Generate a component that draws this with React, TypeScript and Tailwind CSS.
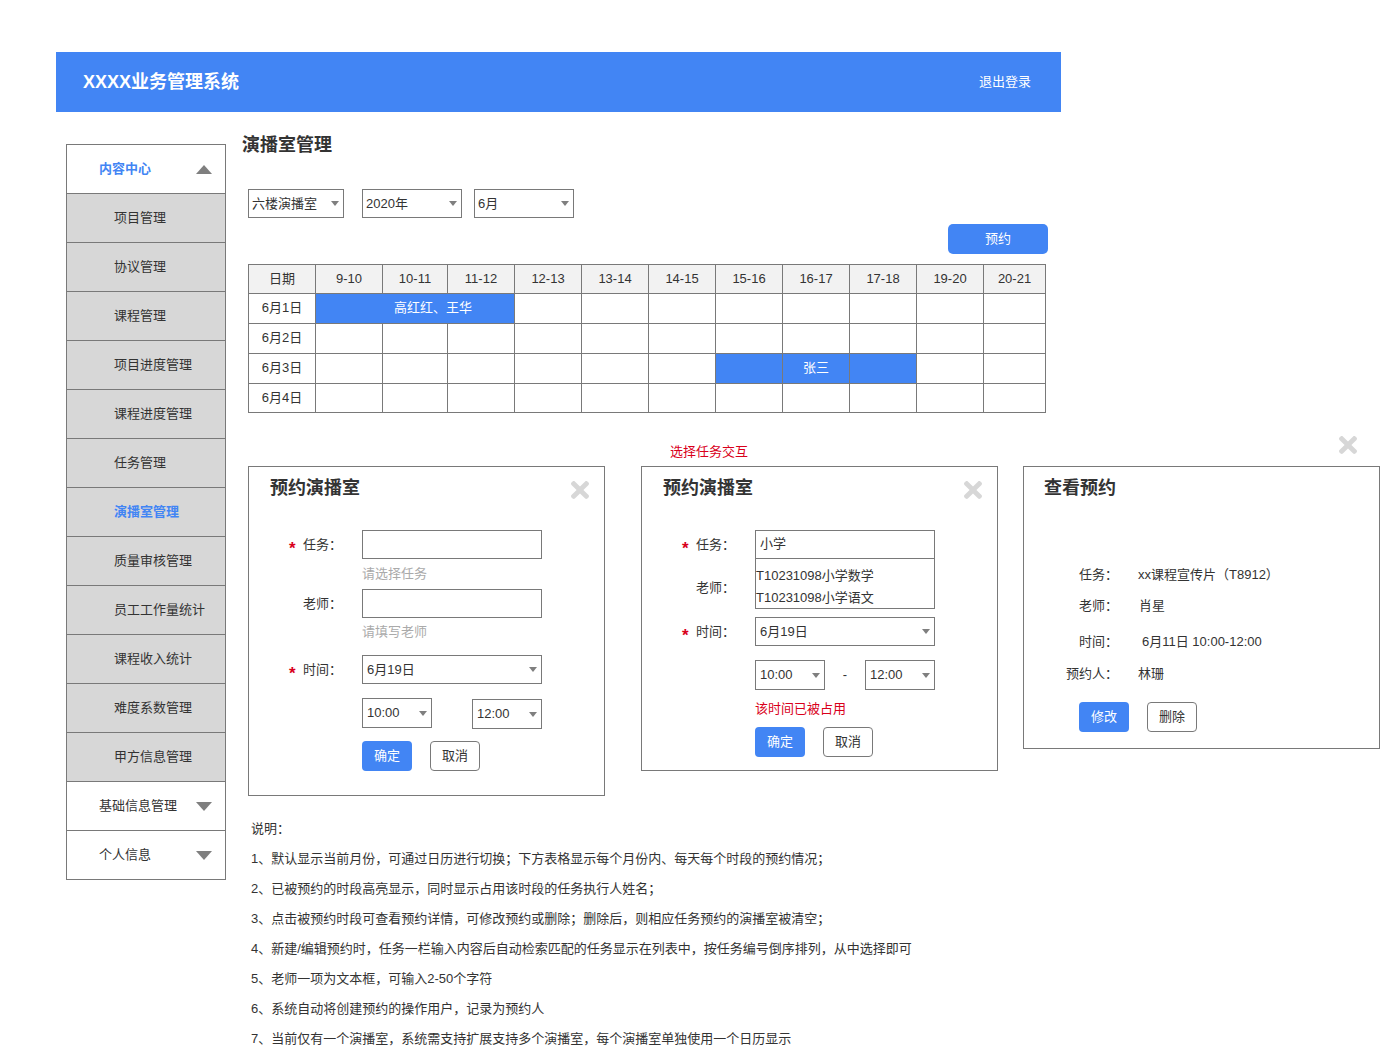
import React from "react";

function Caret({ className = "" }: { className?: string }) {
  return (
    <svg width="8" height="5" viewBox="0 0 8 5" className={className}>
      <path d="M0 0H8L4 5Z" fill="#7f7f7f" />
    </svg>
  );
}

function Tri({ up }: { up?: boolean }) {
  return (
    <svg width="16" height="9" viewBox="0 0 16 9">
      {up ? <path d="M0 9H16L8 0Z" fill="#7f7f7f" /> : <path d="M0 0H16L8 9Z" fill="#7f7f7f" />}
    </svg>
  );
}

function CloseX({ className = "" }: { className?: string }) {
  return (
    <svg width="18" height="18" viewBox="0 80 352 352" className={className}>
      <path
        fill="#d7d7d7"
        d="M242.72 256l100.07-100.07c12.28-12.28 12.28-32.19 0-44.48l-22.24-22.24c-12.28-12.28-32.19-12.28-44.48 0L176 189.28 75.93 89.21c-12.28-12.28-32.19-12.28-44.48 0L9.21 111.45c-12.28 12.28-12.28 32.19 0 44.48L109.28 256 9.21 356.07c-12.28 12.28-12.28 32.19 0 44.48l22.24 22.24c12.28 12.28 32.2 12.28 44.48 0L176 322.72l100.07 100.07c12.28 12.28 32.2 12.28 44.48 0l22.24-22.24c12.28-12.28 12.28-32.19 0-44.48L242.72 256z"
      />
    </svg>
  );
}

function Select({ text, className = "" }: { text: string; className?: string }) {
  return (
    <div
      className={
        "flex shrink-0 items-center justify-between border border-[#797979] bg-white pr-[4px] text-[13px] leading-[18px] text-[#333333] " +
        className
      }
    >
      <span>{text}</span>
      <Caret />
    </div>
  );
}

function Label({ text, req }: { text: string; req?: boolean }) {
  return (
    <div className="flex w-[73px] shrink-0 items-center text-[13px] leading-[20px] text-[#333333]">
      <span className="relative top-[4px] w-[14px] text-[17px] font-bold leading-[20px] text-[#d9001b]">
        {req ? "*" : ""}
      </span>
      <span>{text}</span>
    </div>
  );
}

function BlueBtn({ text }: { text: string }) {
  return (
    <div className="flex h-[30px] w-[50px] items-center justify-center rounded-[4px] bg-[#4285f4] text-[13px] text-white">
      {text}
    </div>
  );
}

function WhiteBtn({ text }: { text: string }) {
  return (
    <div className="flex h-[30px] w-[50px] items-center justify-center rounded-[4px] border border-[#797979] bg-white text-[13px] text-[#333333]">
      {text}
    </div>
  );
}

const subItems = [
  "项目管理",
  "协议管理",
  "课程管理",
  "项目进度管理",
  "课程进度管理",
  "任务管理",
  "演播室管理",
  "质量审核管理",
  "员工工作量统计",
  "课程收入统计",
  "难度系数管理",
  "甲方信息管理",
];

const cols = ["日期", "9-10", "10-11", "11-12", "12-13", "13-14", "14-15", "15-16", "16-17", "17-18", "19-20", "20-21"];

const notes = [
  "说明：",
  "1、默认显示当前月份，可通过日历进行切换；下方表格显示每个月份内、每天每个时段的预约情况；",
  "2、已被预约的时段高亮显示，同时显示占用该时段的任务执行人姓名；",
  "3、点击被预约时段可查看预约详情，可修改预约或删除；删除后，则相应任务预约的演播室被清空；",
  "4、新建/编辑预约时，任务一栏输入内容后自动检索匹配的任务显示在列表中，按任务编号倒序排列，从中选择即可",
  "5、老师一项为文本框，可输入2-50个字符",
  "6、系统自动将创建预约的操作用户，记录为预约人",
  "7、当前仅有一个演播室，系统需支持扩展支持多个演播室，每个演播室单独使用一个日历显示",
];

function Cell({ children, blue, last, className = "" }: { children?: React.ReactNode; blue?: boolean; last?: boolean; className?: string }) {
  return (
    <div
      className={
        "flex items-center justify-center border-b border-r border-[#797979] pb-[1px] text-[13px] " +
        (last ? "h-[29px] " : "h-[30px] ") +
        (blue ? "bg-[#4285f4] text-white " : "bg-white text-[#333333] ") +
        className
      }
    >
      {children}
    </div>
  );
}

function Table() {
  const rows = ["6月1日", "6月2日", "6月3日", "6月4日"];
  return (
    <div className="mt-[10px] grid w-[798px] grid-cols-[67px_67px_65px_67px_67px_67px_67px_67px_67px_67px_67px_62px] border-l border-t border-[#797979]">
      {cols.map((c) => (
        <div
          key={c}
          className="flex h-[29px] items-center justify-center border-b border-r border-[#797979] bg-[#f2f2f2] text-[13px] text-[#333333]"
        >
          {c}
        </div>
      ))}
      {rows.map((r, ri) => {
        const last = ri === 3;
        const cells: React.ReactNode[] = [<Cell key="d" last={last}>{r}</Cell>];
        if (ri === 0) {
          cells.push(
            <Cell key="b" blue className="col-span-3 pl-[36px]">
              高红红、王华
            </Cell>
          );
          for (let i = 0; i < 8; i++) cells.push(<Cell key={"e" + i} last={last} />);
        } else if (ri === 2) {
          for (let i = 0; i < 11; i++) {
            const blue = i >= 6 && i <= 8;
            cells.push(
              <Cell key={"e" + i} blue={blue}>
                {i === 7 ? "张三" : null}
              </Cell>
            );
          }
        } else {
          for (let i = 0; i < 11; i++) cells.push(<Cell key={"e" + i} last={last} />);
        }
        return cells;
      })}
    </div>
  );
}

function DialogOne() {
  return (
    <div className="relative mt-[21px] h-[330px] w-[357px] shrink-0 border border-[#797979] bg-white">
      <div className="pl-[21px] pt-[9px] text-[18px] font-bold leading-[24px] text-[#333333]">预约演播室</div>
      <CloseX className="absolute right-[15px] top-[14px]" />
      <div className="mt-[30px] pl-[40px]">
        <div className="flex items-center">
          <Label text="任务：" req />
          <div className="h-[29px] w-[180px] border border-[#797979]" />
        </div>
        <div className="ml-[73px] mt-[8px] text-[13px] leading-[14px] text-[#aaaaaa]">请选择任务</div>
        <div className="mt-[8px] flex items-center">
          <Label text="老师：" />
          <div className="h-[29px] w-[180px] border border-[#797979]" />
        </div>
        <div className="ml-[73px] mt-[7px] text-[13px] leading-[14px] text-[#aaaaaa]">请填写老师</div>
        <div className="mt-[16px] flex items-center">
          <Label text="时间：" req />
          <Select text="6月19日" className="h-[29px] w-[180px] pl-[4px]" />
        </div>
        <div className="ml-[73px] mt-[14px] flex gap-[40px]">
          <Select text="10:00" className="h-[30px] w-[70px] pl-[4px]" />
          <Select text="12:00" className="mt-[1px] h-[30px] w-[70px] pl-[4px]" />
        </div>
        <div className="ml-[73px] mt-[12px] flex gap-[18px]">
          <BlueBtn text="确定" />
          <WhiteBtn text="取消" />
        </div>
      </div>
    </div>
  );
}

function DialogTwo() {
  return (
    <div className="ml-[36px] shrink-0">
      <div className="pl-[29px] text-[13px] leading-[14px] text-[#d9001b]">选择任务交互</div>
      <div className="relative mt-[7px] h-[305px] w-[357px] border border-[#797979] bg-white">
        <div className="pl-[21px] pt-[9px] text-[18px] font-bold leading-[24px] text-[#333333]">预约演播室</div>
        <CloseX className="absolute right-[15px] top-[14px]" />
        <div className="mt-[30px] pl-[40px]">
          <div className="flex items-center">
            <Label text="任务：" req />
            <div className="flex h-[29px] w-[180px] items-center border border-[#797979] pb-[2px] pl-[4px] text-[13px] text-[#333333]">
              小学
            </div>
          </div>
          <div className="flex items-start">
            <div className="mt-[19px]">
              <Label text="老师：" />
            </div>
            <div className="h-[50px] w-[180px] border-x border-b border-[#797979] pt-[6px] text-[13px] leading-[22px] text-[#333333]">
              <div>T10231098小学数学</div>
              <div>T10231098小学语文</div>
            </div>
          </div>
          <div className="mt-[8px] flex items-center">
            <Label text="时间：" req />
            <Select text="6月19日" className="h-[29px] w-[180px] pl-[4px]" />
          </div>
          <div className="ml-[73px] mt-[14px] flex items-center">
            <Select text="10:00" className="h-[30px] w-[70px] pl-[4px]" />
            <div className="w-[40px] text-center text-[13px] text-[#333333]">-</div>
            <Select text="12:00" className="h-[30px] w-[70px] pl-[4px]" />
          </div>
          <div className="ml-[73px] mt-[12px] text-[13px] leading-[14px] text-[#d9001b]">该时间已被占用</div>
          <div className="ml-[73px] mt-[11px] flex gap-[18px]">
            <BlueBtn text="确定" />
            <WhiteBtn text="取消" />
          </div>
        </div>
      </div>
    </div>
  );
}

function InfoRow({ label, value, className = "", valueClass = "" }: { label: string; value: string; className?: string; valueClass?: string }) {
  return (
    <div className={"flex text-[13px] leading-[20px] text-[#333333] " + className}>
      <div className="w-[94px] shrink-0 text-right">{label}</div>
      <div className={"ml-[20px] " + valueClass}>{value}</div>
    </div>
  );
}

function DialogThree() {
  return (
    <div className="relative ml-[25px] mt-[21px] h-[283px] w-[357px] shrink-0 border border-[#797979] bg-white">
      <CloseX className="absolute right-[22px] top-[-31px]" />
      <div className="pl-[20px] pt-[9px] text-[18px] font-bold leading-[24px] text-[#333333]">查看预约</div>
      <InfoRow label="任务：" value="xx课程宣传片（T8912）" className="mt-[65px]" />
      <InfoRow label="老师：" value="肖星" className="mt-[11px]" valueClass="pl-[1px]" />
      <InfoRow label="时间：" value="6月11日 10:00-12:00" className="mt-[16px]" valueClass="pl-[4px]" />
      <InfoRow label="预约人：" value="林珊" className="mt-[12px]" />
      <div className="ml-[55px] mt-[18px] flex gap-[18px]">
        <BlueBtn text="修改" />
        <WhiteBtn text="删除" />
      </div>
    </div>
  );
}

export default function App() {
  return (
    <div className="relative h-[1063px] w-[1380px] overflow-hidden bg-white font-['Liberation_Sans','Noto_Sans_CJK_SC',sans-serif] text-[#333333]">
      <div className="pt-[52px]">
        <header className="ml-[56px] flex h-[60px] w-[1005px] items-center justify-between bg-[#4285f4] pl-[27px] pr-[30px] text-white">
          <div className="text-[18px] font-bold leading-[24px]">XXXX业务管理系统</div>
          <div className="text-[13px] leading-[20px]">退出登录</div>
        </header>
        <div className="flex items-start">
          <aside className="ml-[66px] mt-[32px] w-[160px] shrink-0 border border-[#797979]">
            <div className="flex h-[49px] items-center justify-between border-b border-[#797979] bg-white pl-[32px] pr-[13px]">
              <span className="text-[13px] font-bold text-[#4285f4]">内容中心</span>
              <Tri up />
            </div>
            {subItems.map((s) => (
              <div
                key={s}
                className={
                  "flex h-[49px] items-center border-b border-[#797979] bg-[#d7d7d7] pl-[47px] text-[13px] " +
                  (s === "演播室管理" ? "font-bold text-[#4285f4]" : "text-[#333333]")
                }
              >
                {s}
              </div>
            ))}
            <div className="flex h-[49px] items-center justify-between border-b border-[#797979] bg-white pl-[32px] pr-[13px]">
              <span className="text-[13px] text-[#333333]">基础信息管理</span>
              <Tri />
            </div>
            <div className="flex h-[48px] items-center justify-between bg-white pl-[32px] pr-[13px]">
              <span className="text-[13px] text-[#333333]">个人信息</span>
              <Tri />
            </div>
          </aside>
          <main className="ml-[16px] shrink-0 pt-[21px]">
            <h1 className="text-[18px] font-bold leading-[24px] text-[#333333]">演播室管理</h1>
            <div className="ml-[6px]">
              <div className="mt-[32px] flex">
                <Select text="六楼演播室" className="h-[29px] w-[96px] pl-[3px]" />
                <Select text="2020年" className="ml-[18px] h-[29px] w-[100px] pl-[3px]" />
                <Select text="6月" className="ml-[12px] h-[29px] w-[100px] pl-[3px]" />
              </div>
              <div className="mt-[6px] flex w-[800px] justify-end">
                <div className="flex h-[30px] w-[100px] items-center justify-center rounded-[5px] bg-[#4285f4] text-[13px] text-white">
                  预约
                </div>
              </div>
              <Table />
              <div className="mt-[32px] flex items-start">
                <DialogOne />
                <DialogTwo />
                <DialogThree />
              </div>
              <div className="ml-[3px] mt-[18px] text-[13px] leading-[30px] text-[#333333]">
                {notes.map((n) => (
                  <div key={n}>{n}</div>
                ))}
              </div>
            </div>
          </main>
        </div>
      </div>
    </div>
  );
}
